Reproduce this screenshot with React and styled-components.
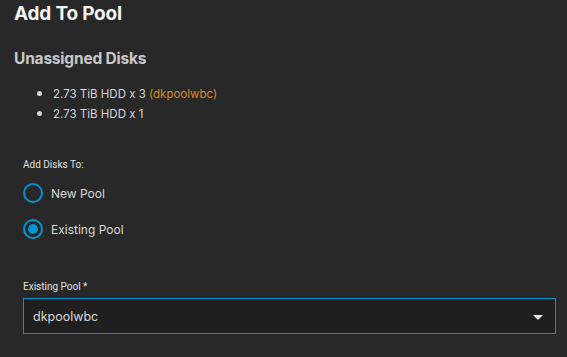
import React, { useState } from 'react';
import styled, { createGlobalStyle } from 'styled-components';

const GlobalStyle = createGlobalStyle`
  html, body {
    margin: 0;
    padding: 0;
    background: #282828;
  }
  body {
    font-family: Inter, "Noto Sans", sans-serif;
    color: #e6e6e6;
  }
`;

const Page = styled.div`
  width: 567px;
  height: 357px;
  overflow: hidden;
  padding: 0 11px 0 14px;
  box-sizing: border-box;
`;

const Title = styled.h1`
  margin: 0;
  padding-top: 3px;
  font-size: 19px;
  line-height: 22px;
  font-weight: 700;
  color: #f4f4f4;
  letter-spacing: -0.2px;
`;

const SectionTitle = styled.h2`
  margin: 24px 0 0;
  font-size: 15.5px;
  line-height: 20px;
  font-weight: 700;
  color: #c9c9c9;
  letter-spacing: -0.2px;
`;

const DiskList = styled.ul`
  margin: 14px 0 0;
  padding: 0 0 0 39px;
  list-style: disc;
  font-size: 11.5px;
  line-height: 20px;
  color: #d6d6d6;

  li {
    height: 20px;
  }

  li::marker {
    font-size: 14px;
  }
`;

const PoolName = styled.span`
  color: #d8892c;
`;

const Form = styled.div`
  padding-left: 9px;
  margin-top: 35px;
`;

const FieldLabel = styled.div`
  font-family: Roboto, "Liberation Sans", sans-serif;
  font-size: 10px;
  line-height: 14px;
  color: #e0e0e0;
`;

const RadioGroup = styled.div`
  display: flex;
  flex-direction: column;
  gap: 16px;
  margin-top: 11px;
`;

const RadioRow = styled.label`
  display: flex;
  align-items: center;
  gap: 8px;
  cursor: pointer;
  font-size: 12px;
  color: #d8d8d8;
`;

const RadioCircle = styled.span`
  width: 20px;
  height: 20px;
  box-sizing: border-box;
  border: 2px solid #0095d5;
  border-radius: 50%;
  display: flex;
  align-items: center;
  justify-content: center;

  &::after {
    content: '';
    width: 10px;
    height: 10px;
    border-radius: 50%;
    background: #0095d5;
    display: ${(p) => (p.$checked ? 'block' : 'none')};
  }
`;

const SelectField = styled.div`
  margin-top: 41px;
`;

const SelectBox = styled.div`
  margin-top: 4px;
  height: 36px;
  box-sizing: border-box;
  border: 1px solid #0095d5;
  background: #1f1f1f;
  display: flex;
  align-items: center;
  justify-content: space-between;
  padding: 0 12px 0 9px;
  font-size: 12.5px;
  color: #d8d8d8;
`;

const Caret = styled.span`
  width: 0;
  height: 0;
  border-left: 5px solid transparent;
  border-right: 5px solid transparent;
  border-top: 5px solid #e8e8e8;
  margin-top: 2px;
`;

const App = () => {
  const [target, setTarget] = useState('existing');

  return (
    <>
      <GlobalStyle />
      <Page>
        <Title>Add To Pool</Title>
        <SectionTitle>Unassigned Disks</SectionTitle>
        <DiskList>
          <li>
            2.73 TiB HDD x 3 <PoolName>(dkpoolwbc)</PoolName>
          </li>
          <li>2.73 TiB HDD x 1</li>
        </DiskList>
        <Form>
          <FieldLabel>Add Disks To:</FieldLabel>
          <RadioGroup>
            <RadioRow onClick={() => setTarget('new')}>
              <RadioCircle $checked={target === 'new'} />
              New Pool
            </RadioRow>
            <RadioRow onClick={() => setTarget('existing')}>
              <RadioCircle $checked={target === 'existing'} />
              Existing Pool
            </RadioRow>
          </RadioGroup>
          <SelectField>
            <FieldLabel>Existing Pool *</FieldLabel>
            <SelectBox>
              dkpoolwbc
              <Caret />
            </SelectBox>
          </SelectField>
        </Form>
      </Page>
    </>
  );
};

export default App;
